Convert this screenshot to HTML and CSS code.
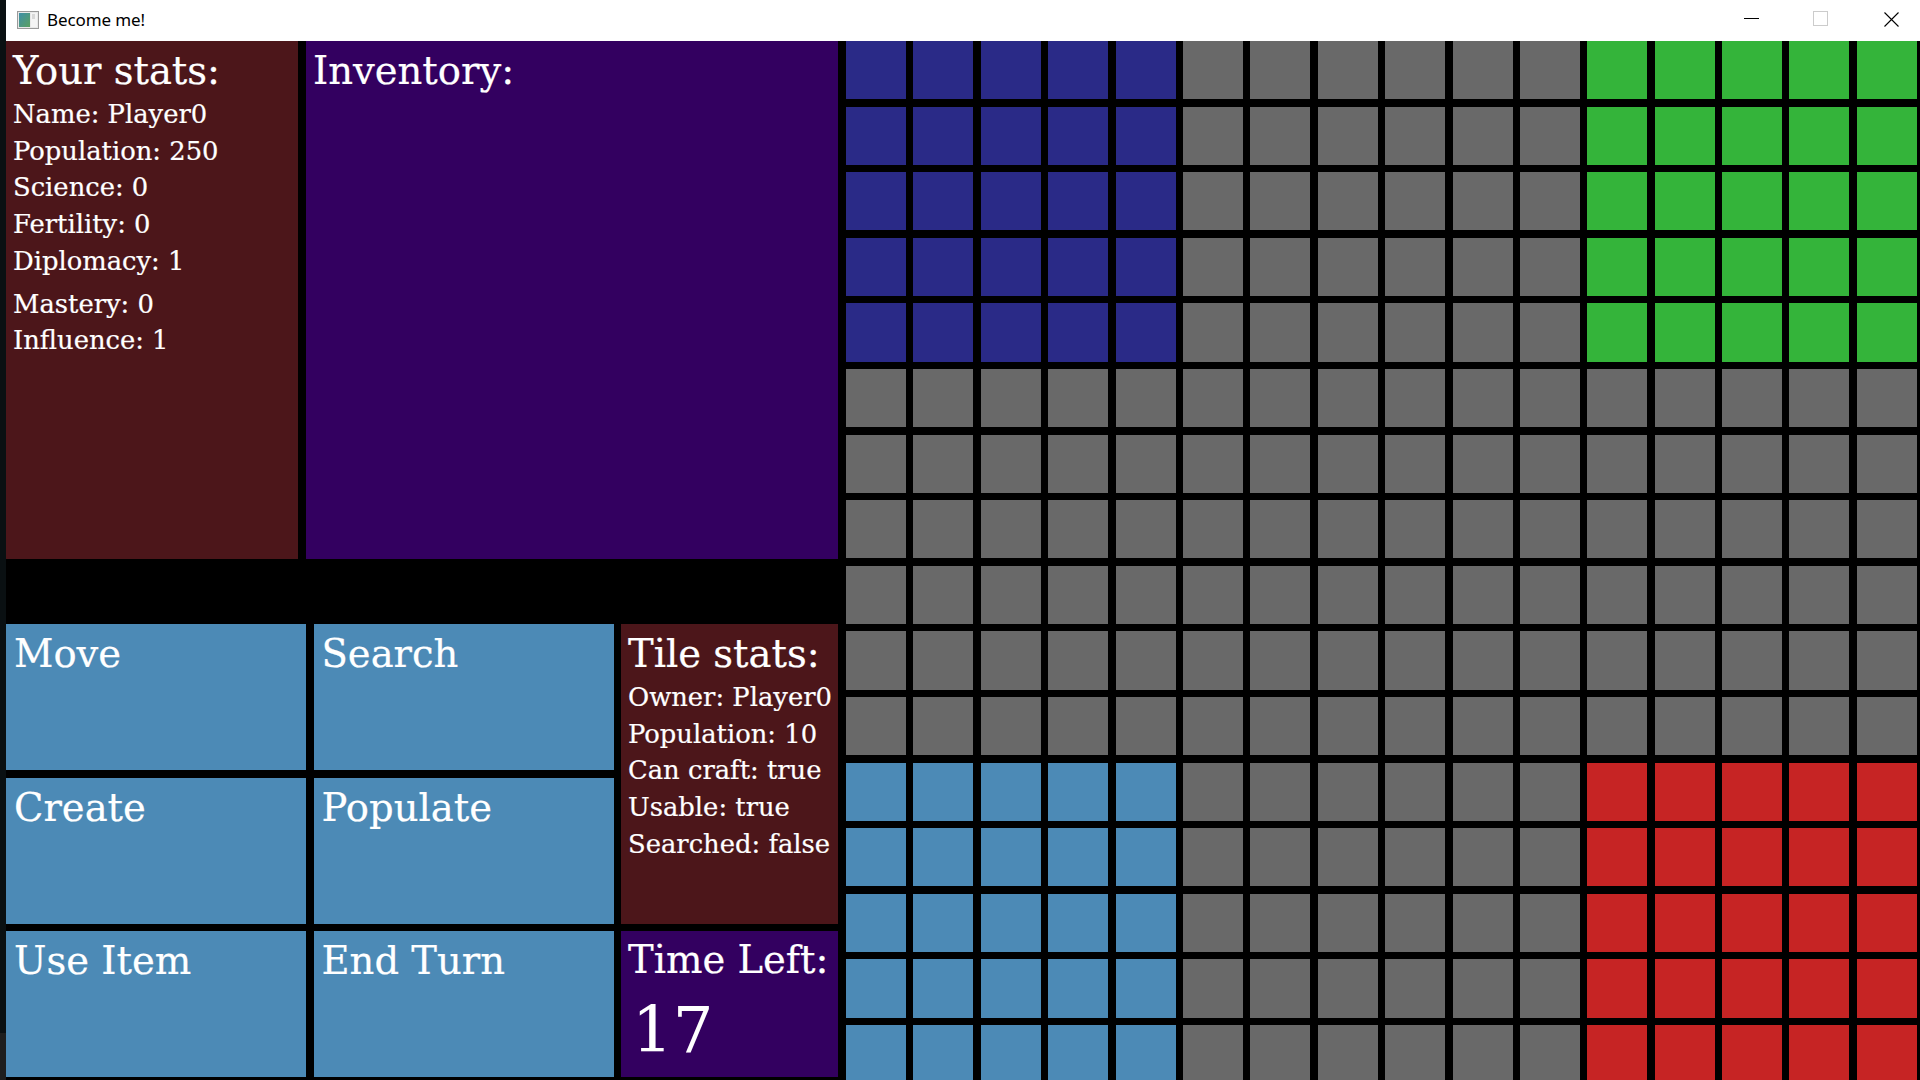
FILE: index.html
```html
<!DOCTYPE html>
<html>
<head>
<meta charset="utf-8">
<title>Become me!</title>
<link rel="stylesheet" href="styles.css">
</head>
<body>
<div class="desktop">
  <div class="desk-edge"></div>
  <div class="window">
    <div class="titlebar">
      <svg class="app-icon" width="22" height="18" viewBox="0 0 22 18">
        <defs>
          <linearGradient id="ig" x1="0" y1="0" x2="1" y2="1">
            <stop offset="0" stop-color="#3f8fa8"/>
            <stop offset="1" stop-color="#5aa060"/>
          </linearGradient>
        </defs>
        <rect x="0.5" y="0.5" width="21" height="17" fill="#e8e8e8" stroke="#9a9a9a"/>
        <rect x="2" y="2" width="11" height="14" fill="url(#ig)"/>
        <rect x="14" y="2" width="6" height="14" fill="#f4f4f4"/>
        <rect x="15" y="3" width="3" height="5" fill="#d8d8d8"/>
      </svg>
      <span class="title">Become me!</span>
      <div class="controls">
        <span class="ctl ctl-min"></span>
        <span class="ctl ctl-max"></span>
        <svg class="ctl ctl-close" width="15" height="15" viewBox="0 0 15 15"><path d="M0.5 0.5 L14.5 14.5 M14.5 0.5 L0.5 14.5" stroke="#000" stroke-width="1.1"/></svg>
      </div>
    </div>
    <div class="client">
      <div class="side">
        <div class="top-row">
          <section class="panel stats">
            <h2 class="heading">Your stats:</h2>
            <p class="line">Name: Player0</p>
            <p class="line">Population: 250</p>
            <p class="line">Science: 0</p>
            <p class="line">Fertility: 0</p>
            <p class="line">Diplomacy: 1</p>
            <p class="line line-gap">Mastery: 0</p>
            <p class="line">Influence: 1</p>
          </section>
          <section class="panel inventory">
            <h2 class="heading">Inventory:</h2>
          </section>
        </div>
        <div class="actions">
          <div class="btn">Move</div>
          <div class="btn">Search</div>
          <section class="panel tile-stats">
            <h2 class="heading">Tile stats:</h2>
            <p class="line">Owner: Player0</p>
            <p class="line">Population: 10</p>
            <p class="line">Can craft: true</p>
            <p class="line">Usable: true</p>
            <p class="line">Searched: false</p>
          </section>
          <div class="btn">Create</div>
          <div class="btn">Populate</div>
          <div class="btn">Use Item</div>
          <div class="btn">End Turn</div>
          <section class="panel timer">
            <h2 class="heading">Time Left:</h2>
            <div class="time">17</div>
          </section>
        </div>
      </div>
      <div class="map">
        <i class="c nv"></i><i class="c nv"></i><i class="c nv"></i><i class="c nv"></i><i class="c nv"></i><i class="c gy"></i><i class="c gy"></i><i class="c gy"></i><i class="c gy"></i><i class="c gy"></i><i class="c gy"></i><i class="c gn"></i><i class="c gn"></i><i class="c gn"></i><i class="c gn"></i><i class="c gn"></i>
        <i class="c nv"></i><i class="c nv"></i><i class="c nv"></i><i class="c nv"></i><i class="c nv"></i><i class="c gy"></i><i class="c gy"></i><i class="c gy"></i><i class="c gy"></i><i class="c gy"></i><i class="c gy"></i><i class="c gn"></i><i class="c gn"></i><i class="c gn"></i><i class="c gn"></i><i class="c gn"></i>
        <i class="c nv"></i><i class="c nv"></i><i class="c nv"></i><i class="c nv"></i><i class="c nv"></i><i class="c gy"></i><i class="c gy"></i><i class="c gy"></i><i class="c gy"></i><i class="c gy"></i><i class="c gy"></i><i class="c gn"></i><i class="c gn"></i><i class="c gn"></i><i class="c gn"></i><i class="c gn"></i>
        <i class="c nv"></i><i class="c nv"></i><i class="c nv"></i><i class="c nv"></i><i class="c nv"></i><i class="c gy"></i><i class="c gy"></i><i class="c gy"></i><i class="c gy"></i><i class="c gy"></i><i class="c gy"></i><i class="c gn"></i><i class="c gn"></i><i class="c gn"></i><i class="c gn"></i><i class="c gn"></i>
        <i class="c nv"></i><i class="c nv"></i><i class="c nv"></i><i class="c nv"></i><i class="c nv"></i><i class="c gy"></i><i class="c gy"></i><i class="c gy"></i><i class="c gy"></i><i class="c gy"></i><i class="c gy"></i><i class="c gn"></i><i class="c gn"></i><i class="c gn"></i><i class="c gn"></i><i class="c gn"></i>
        <i class="c gy"></i><i class="c gy"></i><i class="c gy"></i><i class="c gy"></i><i class="c gy"></i><i class="c gy"></i><i class="c gy"></i><i class="c gy"></i><i class="c gy"></i><i class="c gy"></i><i class="c gy"></i><i class="c gy"></i><i class="c gy"></i><i class="c gy"></i><i class="c gy"></i><i class="c gy"></i>
        <i class="c gy"></i><i class="c gy"></i><i class="c gy"></i><i class="c gy"></i><i class="c gy"></i><i class="c gy"></i><i class="c gy"></i><i class="c gy"></i><i class="c gy"></i><i class="c gy"></i><i class="c gy"></i><i class="c gy"></i><i class="c gy"></i><i class="c gy"></i><i class="c gy"></i><i class="c gy"></i>
        <i class="c gy"></i><i class="c gy"></i><i class="c gy"></i><i class="c gy"></i><i class="c gy"></i><i class="c gy"></i><i class="c gy"></i><i class="c gy"></i><i class="c gy"></i><i class="c gy"></i><i class="c gy"></i><i class="c gy"></i><i class="c gy"></i><i class="c gy"></i><i class="c gy"></i><i class="c gy"></i>
        <i class="c gy"></i><i class="c gy"></i><i class="c gy"></i><i class="c gy"></i><i class="c gy"></i><i class="c gy"></i><i class="c gy"></i><i class="c gy"></i><i class="c gy"></i><i class="c gy"></i><i class="c gy"></i><i class="c gy"></i><i class="c gy"></i><i class="c gy"></i><i class="c gy"></i><i class="c gy"></i>
        <i class="c gy"></i><i class="c gy"></i><i class="c gy"></i><i class="c gy"></i><i class="c gy"></i><i class="c gy"></i><i class="c gy"></i><i class="c gy"></i><i class="c gy"></i><i class="c gy"></i><i class="c gy"></i><i class="c gy"></i><i class="c gy"></i><i class="c gy"></i><i class="c gy"></i><i class="c gy"></i>
        <i class="c gy"></i><i class="c gy"></i><i class="c gy"></i><i class="c gy"></i><i class="c gy"></i><i class="c gy"></i><i class="c gy"></i><i class="c gy"></i><i class="c gy"></i><i class="c gy"></i><i class="c gy"></i><i class="c gy"></i><i class="c gy"></i><i class="c gy"></i><i class="c gy"></i><i class="c gy"></i>
        <i class="c bl"></i><i class="c bl"></i><i class="c bl"></i><i class="c bl"></i><i class="c bl"></i><i class="c gy"></i><i class="c gy"></i><i class="c gy"></i><i class="c gy"></i><i class="c gy"></i><i class="c gy"></i><i class="c rd"></i><i class="c rd"></i><i class="c rd"></i><i class="c rd"></i><i class="c rd"></i>
        <i class="c bl"></i><i class="c bl"></i><i class="c bl"></i><i class="c bl"></i><i class="c bl"></i><i class="c gy"></i><i class="c gy"></i><i class="c gy"></i><i class="c gy"></i><i class="c gy"></i><i class="c gy"></i><i class="c rd"></i><i class="c rd"></i><i class="c rd"></i><i class="c rd"></i><i class="c rd"></i>
        <i class="c bl"></i><i class="c bl"></i><i class="c bl"></i><i class="c bl"></i><i class="c bl"></i><i class="c gy"></i><i class="c gy"></i><i class="c gy"></i><i class="c gy"></i><i class="c gy"></i><i class="c gy"></i><i class="c rd"></i><i class="c rd"></i><i class="c rd"></i><i class="c rd"></i><i class="c rd"></i>
        <i class="c bl"></i><i class="c bl"></i><i class="c bl"></i><i class="c bl"></i><i class="c bl"></i><i class="c gy"></i><i class="c gy"></i><i class="c gy"></i><i class="c gy"></i><i class="c gy"></i><i class="c gy"></i><i class="c rd"></i><i class="c rd"></i><i class="c rd"></i><i class="c rd"></i><i class="c rd"></i>
        <i class="c bl"></i><i class="c bl"></i><i class="c bl"></i><i class="c bl"></i><i class="c bl"></i><i class="c gy"></i><i class="c gy"></i><i class="c gy"></i><i class="c gy"></i><i class="c gy"></i><i class="c gy"></i><i class="c rd"></i><i class="c rd"></i><i class="c rd"></i><i class="c rd"></i><i class="c rd"></i>
      </div>
    </div>
  </div>
</div>
</body>
</html>
```
FILE: styles.css
```css
* { box-sizing: border-box; }
html, body { margin: 0; padding: 0; }
body {
  width: 1920px;
  height: 1080px;
  overflow: hidden;
  background: #0b1113;
  font-family: "DejaVu Serif", serif;
  color: #fff;
}
.desktop {
  display: flex;
  height: 1080px;
}
.desk-edge {
  width: 6px;
  flex: none;
  background: linear-gradient(to bottom, #0a1012 0, #0a1012 1033px, #1e1e1e 1033px);
}
.window {
  flex: 1;
  display: flex;
  flex-direction: column;
  background: #000;
  min-width: 0;
}
.titlebar {
  height: 41px;
  flex: none;
  background: #fff;
  display: flex;
  align-items: center;
  padding-left: 11px;
  color: #000;
}
.app-icon { flex: none; margin-top: -1px; }
.title {
  font-family: "Noto Sans", "Liberation Sans", sans-serif;
  font-size: 17px;
  margin-left: 8px;
  margin-top: -3px;
  letter-spacing: -0.1px;
}
.controls {
  margin-left: auto;
  display: flex;
  align-items: center;
  padding-right: 21px;
  height: 100%;
}
.ctl { display: block; flex: none; }
.ctl-min {
  width: 15px;
  height: 1px;
  background: #000;
  margin-top: -4px;
}
.ctl-max {
  width: 15px;
  height: 15px;
  border: 1px solid #cccccc;
  margin-left: 54px;
  margin-top: -4px;
}
.ctl-close {
  margin-left: 56px;
  margin-top: -3px;
}
.client {
  flex: 1;
  display: flex;
  min-height: 0;
  overflow: hidden;
}
.side {
  width: 832px;
  flex: none;
  display: flex;
  flex-direction: column;
}
.top-row {
  height: 518px;
  display: flex;
  gap: 8px;
}
.panel { padding: 0 7px; }
.stats {
  width: 292px;
  background: #4c161a;
  padding-top: 9px;
}
.inventory {
  flex: 1;
  background: #330060;
  padding-top: 9px;
}
.heading {
  margin: 0;
  font-weight: normal;
  font-size: 38.5px;
  line-height: 42px;
  white-space: nowrap;
  -webkit-text-stroke: 0.2px #fff;
}
.line {
  margin: 0;
  font-size: 25.8px;
  line-height: 36.7px;
  white-space: nowrap;
  -webkit-text-stroke: 0.2px #fff;
}
.stats .heading { margin-bottom: 4px; }
.line-gap { margin-top: 6px; }
.actions {
  margin-top: 65px;
  display: grid;
  grid-template-columns: 300px 300px 217px;
  grid-template-rows: 146px 146px 146px;
  gap: 7.5px;
}
.btn {
  background: #4c8ab6;
  font-size: 38.5px;
  line-height: 42px;
  padding: 9px 8px;
  -webkit-text-stroke: 0.2px #fff;
}
.tile-stats {
  grid-column: 3;
  grid-row: 1 / span 2;
  background: #4c161a;
  padding: 9px 0 0 7px;
  overflow: hidden;
}
.tile-stats .heading { margin-bottom: 4px; }
.timer {
  grid-column: 3;
  grid-row: 3;
  background: #330060;
  padding: 8px 0 0 7px;
}
.time {
  font-size: 64px;
  line-height: 76px;
  padding-left: 4px;
  margin-top: 11px;
}
.map {
  margin-left: 8px;
  flex: none;
  display: grid;
  grid-template-columns: repeat(16, 60px);
  grid-auto-rows: 58.3px;
  column-gap: 7.4px;
  row-gap: 7.3px;
  align-content: start;
  height: 1039px;
  overflow: hidden;
}
.c { display: block; }
.nv { background: #2a2a87; }
.gy { background: #696969; }
.gn { background: #34b43a; }
.bl { background: #4c8ab6; }
.rd { background: #c62424; }
```
